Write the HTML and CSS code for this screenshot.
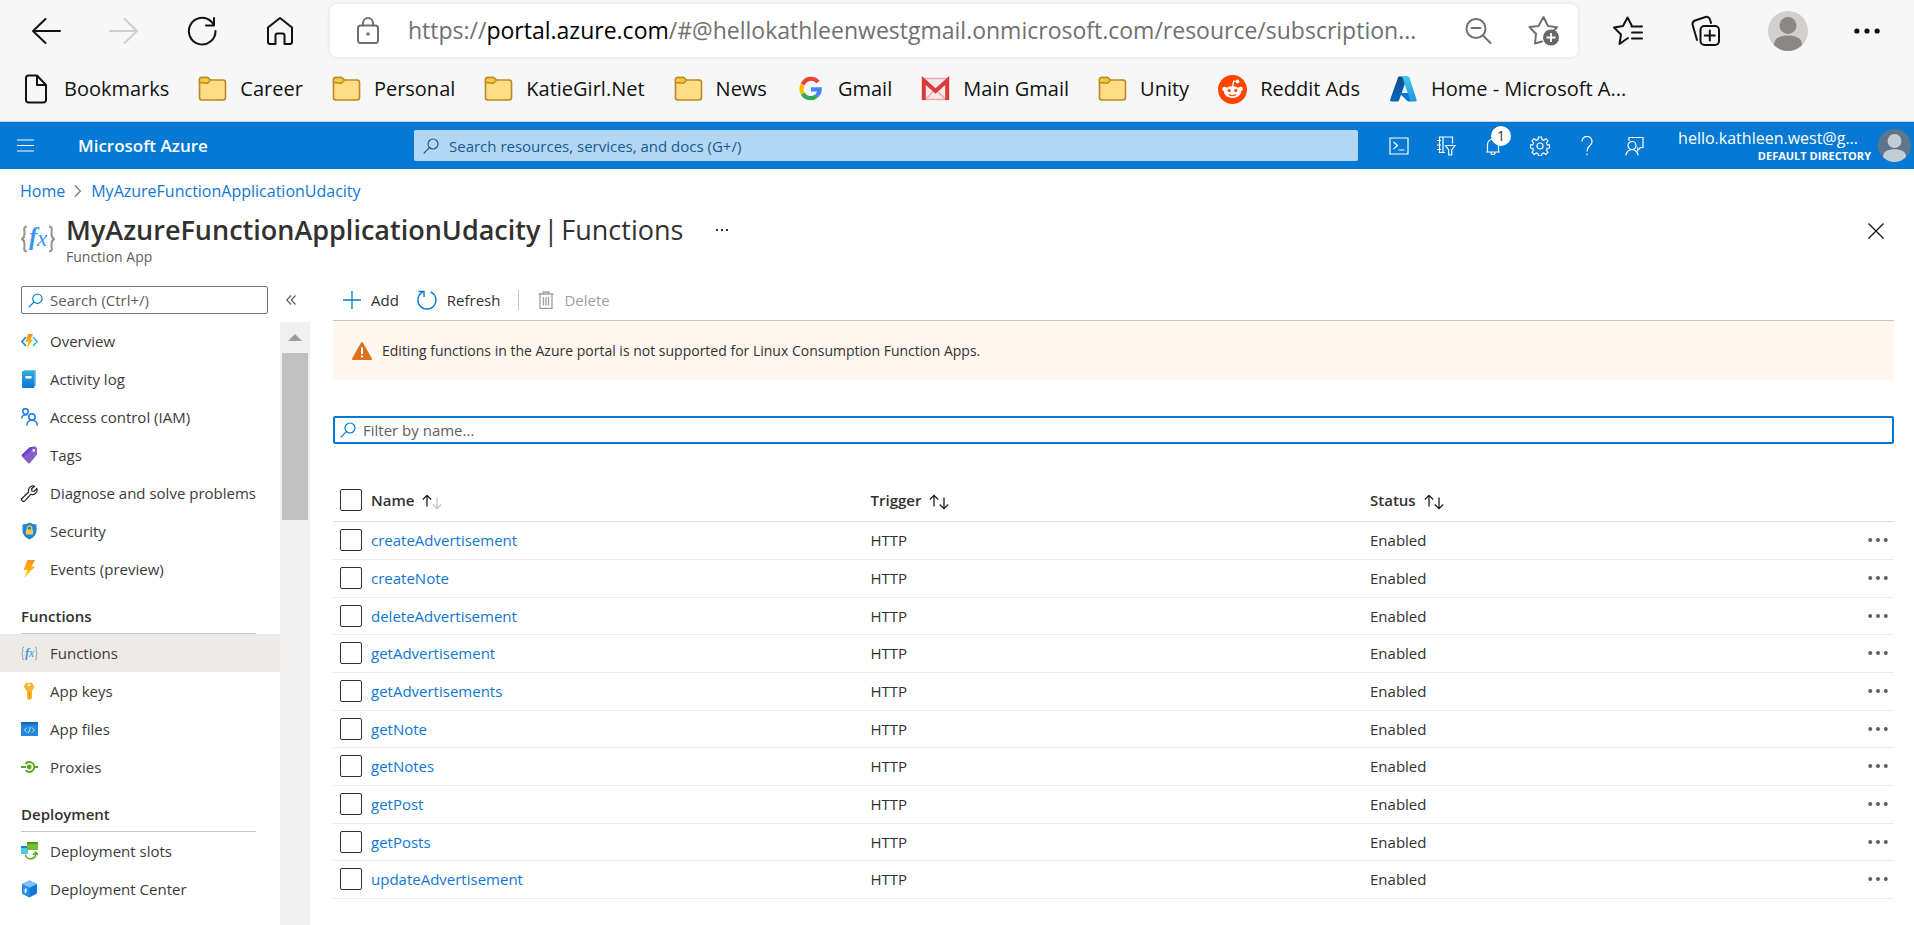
FILE: index.html
```html
<!DOCTYPE html>
<html lang="en">
<head>
<meta charset="utf-8">
<title>MyAzureFunctionApplicationUdacity | Functions - Microsoft Azure</title>
<link rel="stylesheet" href="styles.css">
</head>
<body>
<svg class="defs" aria-hidden="true">
  <defs>
    <linearGradient id="blue" x1="0" y1="0" x2="0" y2="1"><stop offset="0" stop-color="#32a9dd"/><stop offset="1" stop-color="#0f74d6"/></linearGradient>
    <linearGradient id="bolt" x1="0" y1="0" x2="0" y2="1"><stop offset="0" stop-color="#f78d1e"/><stop offset="1" stop-color="#ffd400"/></linearGradient>
    <linearGradient id="azureA" x1="0" y1="0" x2="0" y2="1"><stop offset="0" stop-color="#114a8b"/><stop offset="1" stop-color="#0669bc"/></linearGradient>
    <linearGradient id="azureB" x1="0" y1="0" x2="0" y2="1"><stop offset="0" stop-color="#3ccbf4"/><stop offset="1" stop-color="#2892df"/></linearGradient>
    <symbol id="folder" viewBox="0 0 29 26"><path d="M1.5 3.5a2 2 0 0 1 2-2h6l3 2.500H25a2.500 2.500 0 0 1 2.500 2.500v15a2.500 2.500 0 0 1-2.500 2.500H4A2.500 2.500 0 0 1 1.500 21.500z" fill="#ffdc85" stroke="#b98a20" stroke-width="1.600"/><path d="M1.500 6.500V3.500a2 2 0 0 1 2-2h6l3 2.500-3 3.200z" fill="#f8c93f" stroke="#b98a20" stroke-width="1.400" stroke-linejoin="round"/></symbol>
    <symbol id="lens" viewBox="0 0 16 16"><g fill="none" stroke="currentColor" stroke-width="1.200"><circle cx="10" cy="6" r="5"/><path d="M6.400 9.600.7 15.300"/></g></symbol>
    <symbol id="dots" viewBox="0 0 20 6"><g fill="currentColor"><circle cx="2.200" cy="3" r="2"/><circle cx="10" cy="3" r="2"/><circle cx="17.800" cy="3" r="2"/></g></symbol>
    <symbol id="sort" viewBox="0 0 20 16"><g fill="none" stroke="#201f1e" stroke-width="1.300"><path d="M5 12.500V1.500M.8 5.500 5 1.300l4.200 4.200"/><path class="down" d="M15 3.500v11M10.800 10.500l4.200 4.200 4.200-4.200"/></g></symbol>
    <symbol id="fx" viewBox="0 0 34 28"><path d="M6 1.500C2 1.500 3.500 5 3.500 8.500S3 13 1 14c2 1 2.500 2 2.500 5.500S2 26.500 6 26.500M28 1.500c4 0 2.500 3.500 2.500 7S31 13 33 14c-2 1-2.500 2-2.500 5.500s1.500 7-2.500 7" fill="none" stroke="#949494" stroke-width="2"/><text x="8" y="20" font-family="Liberation Serif, serif" font-style="italic" font-weight="bold" font-size="25" fill="#3797ee">f</text><text x="16" y="21" font-family="Liberation Serif, serif" font-style="italic" font-size="23" fill="#3797ee">x</text></symbol>
    <symbol id="user" viewBox="0 0 40 40"><circle cx="20" cy="14.500" r="8.500"/><path d="M6 34c0-7 6-9.500 14-9.500S34 27 34 34a19.500 19.500 0 0 1-28 0z"/></symbol>
  </defs>
</svg>

<div class="browser">
  <div class="nav">
    <div class="nav-buttons">
      <button aria-label="Back"><svg width="30" height="28" viewBox="0 0 30 28"><path d="M29 14H2M14.500 2 2 14l12.500 12" class="ln"/></svg></button>
      <button aria-label="Forward" class="off"><svg width="30" height="28" viewBox="0 0 30 28"><path d="M1 14h27M15.500 2 28 14 15.500 26" class="ln"/></svg></button>
      <button aria-label="Refresh"><svg width="30" height="30" viewBox="0 0 30 30"><path d="M28.500 15A13.300 13.300 0 1 1 24 5.200L27 9M27 2v7.500h-8" class="ln"/></svg></button>
      <button aria-label="Home"><svg width="30" height="30" viewBox="0 0 30 30"><path d="M3 11.500 15 2l12 9.500V26a2 2 0 0 1-2 2h-5.500v-8.500a2 2 0 0 0-2-2h-5a2 2 0 0 0-2 2V28H5a2 2 0 0 1-2-2z" class="ln"/></svg></button>
    </div>
    <div class="address">
      <svg width="24" height="30" viewBox="0 0 24 30"><rect x="2" y="9.500" width="20" height="17.500" rx="2.500" class="ln"/><path d="M7 9.500V7a5 5 0 0 1 10 0v2.500" class="ln"/><circle cx="12" cy="18" r="1.800" fill="currentColor"/></svg>
      <span class="url">https://<b>portal.azure.com</b>/#@hellokathleenwestgmail.onmicrosoft.com/resource/subscription...</span>
      <button aria-label="Zoom out"><svg width="28" height="28" viewBox="0 0 28 28"><circle cx="12" cy="11.500" r="9.500" class="ln"/><path d="M7.500 11h9M19 18.500l7.500 7.500" class="ln"/></svg></button>
      <button aria-label="Add to favorites"><svg width="32" height="31" viewBox="0 0 32 31"><path d="M14 26.500 7 28.500l1-9.500-6.500-7L10.500 11 15.500 2l4.500 9 9 1.200-3 3" class="ln"/><circle cx="23" cy="22.500" r="8" fill="#666"/><path d="M23 18v9M18.500 22.500h9" stroke="#fff" stroke-width="1.800"/></svg></button>
    </div>
    <div class="nav-tools">
      <button aria-label="Favorites"><svg width="32" height="30" viewBox="0 0 32 30"><path d="M16 22 7.500 28 9 18.500 2 11.500l9-1.500 4.500-8.500 4 7.500M19.500 10.500H30M20 16.500h10M20 22.500h10" class="ln"/></svg></button>
      <button aria-label="Collections"><svg width="32" height="32" viewBox="0 0 32 32"><rect x="10.500" y="11" width="18.500" height="19" rx="4" class="ln"/><path d="M19.800 15.500v10M14.800 20.500h10M7 25 2.500 9.500a4 4 0 0 1 2.500-4L15.500 2a3.500 3.500 0 0 1 4.500 2.500L21 8" class="ln"/></svg></button>
      <button aria-label="Profile" class="profile"><svg width="40" height="40" viewBox="0 0 40 40"><circle cx="20" cy="20" r="20" fill="#d2d0ce"/><use href="#user" fill="#8a8886"/></svg></button>
      <button aria-label="Settings and more"><svg width="26" height="8"><use href="#dots"/></svg></button>
    </div>
  </div>
  <nav class="bookmarks">
    <a href="#"><svg width="29" height="30" viewBox="0 0 29 30"><path d="M4 4a2.500 2.500 0 0 1 2.500-2.500H15L24 11v15a2.500 2.500 0 0 1-2.500 2.500h-15A2.500 2.500 0 0 1 4 26zM15 1.500V11h9" class="ln"/></svg>Bookmarks</a>
    <a href="#"><svg width="29" height="26"><use href="#folder"/></svg>Career</a>
    <a href="#"><svg width="29" height="26"><use href="#folder"/></svg>Personal</a>
    <a href="#"><svg width="29" height="26"><use href="#folder"/></svg>KatieGirl.Net</a>
    <a href="#"><svg width="29" height="26"><use href="#folder"/></svg>News</a>
    <a href="#"><svg width="29" height="26" viewBox="0 0 29 26"><g fill="none" stroke-width="4.200"><path d="M22 6A9 9 0 0 0 6.700 8.600" stroke="#ea4335"/><path d="M6.700 8.600a9 9 0 0 0 0 8.800" stroke="#fbbc05"/><path d="M6.700 17.400A9 9 0 0 0 20.500 20" stroke="#34a853"/><path d="M20.500 20a9 9 0 0 0 3.200-6.700H15" stroke="#4285f4"/></g></svg>Gmail</a>
    <a href="#"><svg width="29" height="26" viewBox="0 0 29 26"><path d="M1 2h27v22H1z" fill="#f7e9e9"/><path d="M5 23 14.500 13 24 23M1 2.500h27M1 23.500h27" fill="none" stroke="#eda9a9" stroke-width="1.500"/><path d="M2.800 24V4.500L14.500 15 26.200 4.500V24" fill="none" stroke="#d93a3f" stroke-width="4"/></svg>Main Gmail</a>
    <a href="#"><svg width="29" height="26"><use href="#folder"/></svg>Unity</a>
    <a href="#"><svg width="29" height="29" viewBox="0 0 29 29"><circle cx="14.500" cy="14.500" r="14.500" fill="#ff4500"/><g fill="#fff"><ellipse cx="14.500" cy="17" rx="8.500" ry="6"/><circle cx="6.500" cy="14" r="2.300"/><circle cx="22.500" cy="14" r="2.300"/><circle cx="19.500" cy="6.500" r="1.900"/></g><path d="M14.500 11.500 15.700 6l3.800 1" fill="none" stroke="#fff" stroke-width="1.200"/><g fill="#ff4500"><circle cx="11.200" cy="15.500" r="1.600"/><circle cx="17.800" cy="15.500" r="1.600"/></g><path d="M11 19.500q3.500 2.500 7 0" fill="none" stroke="#ff4500" stroke-width="1.200"/></svg>Reddit Ads</a>
    <a href="#"><svg width="29" height="26" viewBox="0 0 29 26"><path d="M10 .5h8.500L10 24.500q-.5 1-2 1H2.500q-2 0-1.300-2L9 1.500q.3-1 1-1z" fill="url(#azureA)"/><path d="M10 17h12l2 8-5 .5z" fill="#0078d4"/><path d="M12.500.5H19q1 0 1.500 1l7 22q.7 2-1.300 2H20q1-.5.800-2L13.500 1.500q-.3-1-1-1z" fill="url(#azureB)"/></svg>Home - Microsoft A...</a>
  </nav>
</div>

<header class="topbar">
  <button class="menu" aria-label="Show portal menu"><svg width="17" height="13" viewBox="0 0 17 13"><path d="M0 1h17M0 6.500h17M0 12h17" stroke="currentColor" stroke-width="1.200"/></svg></button>
  <a class="brand" href="#">Microsoft Azure</a>
  <label class="search"><svg width="16" height="16"><use href="#lens"/></svg><input type="text" aria-label="Search resources" placeholder="Search resources, services, and docs (G+/)"></label>
  <div class="tools">
    <button aria-label="Cloud Shell"><svg width="20" height="20" viewBox="0 0 20 20"><path d="M1 2h18v16H1zM4.500 6l4 3.500-4 3.500M9.500 14h6" class="thin"/></svg></button>
    <button aria-label="Directories"><svg width="20" height="20" viewBox="0 0 20 20"><path d="M9 16.500H3.500V1h13v6.500M7 1v15.500M1 4.500h4M1 9h4M1 13.500h4M9.500 9.500H19l-3.300 4.500v5h-3v-5z" class="thin"/></svg></button>
    <button aria-label="Notifications" class="bell"><svg width="20" height="20" viewBox="0 0 20 20"><path d="M3 16h14M4.500 16V8.500a5.500 5.500 0 0 1 11 0V16M8 16.500a2 2 0 0 0 4 0" class="thin"/></svg><span class="badge">1</span></button>
    <button aria-label="Settings"><svg width="20" height="20" viewBox="0 0 20 20"><circle cx="10" cy="10" r="3" class="thin"/><path d="M8.500 1h3l.5 2.500 1.700.7L15.900 2.700 18 4.900l-1.500 2.100.7 1.700 2.300.4v2.900l-2.300.5-.7 1.600 1.400 2.200-2.100 2.100-2.100-1.500-1.700.7-.5 2.300h-3L8 17.600l-1.700-.7-2.100 1.500-2.100-2.100 1.400-2.200-.7-1.600-2.300-.5V9.100l2.300-.4.700-1.700L2 4.900l2.100-2.200 2.200 1.500L8 3.500z" class="thin"/></svg></button>
    <button aria-label="Help"><svg width="20" height="20" viewBox="0 0 20 20"><path d="M5 5.500a5 5 0 1 1 8.500 3.400C11 11 10 12 10 15.500M10 17.700v1.500" class="thin"/></svg></button>
    <button aria-label="Feedback"><svg width="20" height="20" viewBox="0 0 20 20"><path d="M5 5V1.500h14v10h-2.500l-3 3V11.500M2 19.500a6 6 0 0 1 12 0" class="thin"/><circle cx="8" cy="9.500" r="4" class="thin"/></svg></button>
  </div>
  <button class="account"><span class="who"><span class="mail">hello.kathleen.west@g...</span><span class="dir">DEFAULT DIRECTORY</span></span><svg width="33" height="33" viewBox="0 0 40 40"><circle cx="20" cy="20" r="20" fill="#5f758d"/><use href="#user" fill="#c4ccd4"/></svg></button>
</header>

<nav class="crumbs" aria-label="Breadcrumb">
  <a href="#">Home</a>
  <svg width="8" height="14" viewBox="0 0 8 14"><path d="m1 1.500 5.500 5.500L1 12.500" fill="none" stroke="#767676" stroke-width="1.200"/></svg>
  <a href="#">MyAzureFunctionApplicationUdacity</a>
</nav>

<section class="title">
  <svg width="34" height="28"><use href="#fx"/></svg>
  <div>
    <div class="title-line">
      <h1><b>MyAzureFunctionApplicationUdacity</b><span>|</span><span>Functions</span></h1>
      <button aria-label="More"><svg width="14" height="4" viewBox="0 0 14 4"><path d="M1 1h2v2H1zM6 1h2v2H6zM11 1h2v2h-2z" fill="#323130"/></svg></button>
    </div>
    <p>Function App</p>
  </div>
  <button class="close" aria-label="Close"><svg width="16" height="16" viewBox="0 0 16 16"><path d="m.5.500 15 15m0-15-15 15" stroke="#111" stroke-width="1.300"/></svg></button>
</section>

<div class="body">
  <aside class="side">
    <div class="side-top">
      <label class="side-search"><svg width="15" height="15"><use href="#lens"/></svg><input type="text" aria-label="Search menu" placeholder="Search (Ctrl+/)"></label>
      <button aria-label="Collapse menu"><svg width="10" height="10" viewBox="0 0 10 10"><path d="M5 .5.800 5 5 9.500M9.500.500 5.300 5l4.200 4.500" fill="none" stroke="#605e5c" stroke-width="1.200"/></svg></button>
    </div>
    <div class="side-scroll">
      <nav class="side-list">
        <a href="#"><svg width="17" height="17" viewBox="0 0 17 17"><path d="M5 4 1 8.500 5 13" fill="none" stroke="#1f8ce0" stroke-width="1.800"/><path d="m12 4 4 4.500-4 4.500" fill="none" stroke="#3bc0e8" stroke-width="1.800"/><path d="M7 1h5L9.500 6.500H12L5.500 16l2-7H4.500z" fill="url(#bolt)"/></svg>Overview</a>
        <a href="#"><svg width="17" height="18" viewBox="0 0 17 18"><path d="M3 0h12v16H3z" fill="#7cc4f0"/><rect x="1" y="1" width="12.500" height="17" rx="1" fill="url(#blue)"/><path d="M4.500 6h6v2.500h-6z" fill="#fff"/></svg>Activity log</a>
        <a href="#"><svg width="17" height="18" viewBox="0 0 17 18"><g fill="none" stroke="#1b76e0" stroke-width="1.500"><circle cx="4.500" cy="3.500" r="2.700"/><path d="M.8 10.500C.8 7.500 3 6.500 6.500 7"/><circle cx="11" cy="9" r="3.200"/><path d="M5.800 17.500c0-7 10.500-7 10.500 0"/></g></svg>Access control (IAM)</a>
        <a href="#"><svg width="17" height="18" viewBox="0 0 17 18"><path d="M8.500 1.500 14 .5l2 1.500v6.500l-7 8.500q-1 1-2 0L1 10.500q-.7-1 .2-2z" fill="#8661c5"/><path d="M8.500 1.500 14 .5 1.500 11l-.5-1q-.5-.800.2-1.500z" fill="#6b3fd0"/><circle cx="12.800" cy="4.500" r="1.400" fill="#f2ecff"/></svg>Tags</a>
        <a href="#"><svg width="17" height="17" viewBox="0 0 17 17"><path d="M13.500 1.200A4.500 4.500 0 0 0 7.800 7L1.200 13.200a1.800 1.800 0 0 0 2.600 2.600L10 9.200a4.500 4.500 0 0 0 5.800-5.700l-2.700 2.800-2.200-.3-.3-2.200z" fill="none" stroke="#222" stroke-width="1.200" stroke-linejoin="round"/></svg>Diagnose and solve problems</a>
        <a href="#"><svg width="17" height="18" viewBox="0 0 17 18"><path d="M8.500.5q3 2 7 2V9q0 5-7 8.500Q1.500 14 1.500 9V2.500q4 0 7-2z" fill="#1d85dc"/><path d="M6.300 8V6a2.200 2.200 0 0 1 4.400 0v2" fill="none" stroke="#f5c13a" stroke-width="1.300"/><rect x="5" y="7.500" width="7" height="5" rx=".6" fill="#f9cb45"/></svg>Security</a>
        <a href="#"><svg width="17" height="18" viewBox="0 0 17 18"><path d="M6.500 0H14l-3.500 6.500H14L3 18l3.500-8H2.500z" fill="url(#bolt)"/></svg>Events (preview)</a>
        <h2>Functions</h2>
        <a href="#" class="on" aria-current="page"><svg width="17" height="15"><use href="#fx"/></svg>Functions</a>
        <a href="#"><svg width="17" height="18" viewBox="0 0 17 18"><path d="M5 .8h6L13.500 5 11 9v7.500l-2 1.500H7.500L6 16.500V9.500L2.500 5z" fill="#fbb731"/><circle cx="8" cy="3" r="1.200" fill="#fff"/><path d="M8.700 10v6" stroke="#e08b00" stroke-width="1"/></svg>App keys</a>
        <a href="#"><svg width="17" height="14" viewBox="0 0 17 14"><path d="M0 0h17v14H0z" fill="#2586dd"/><path d="M0 0h17v2.500H0z" fill="#1268bd"/><path d="M6 5.500 3.500 8 6 10.500M11 5.500 13.500 8 11 10.500M9.500 5l-2 6" fill="none" stroke="#c4e4fb"/></svg>App files</a>
        <a href="#"><svg width="17" height="12" viewBox="0 0 17 12"><path d="M0 6h5M13 6h4" stroke="#57a422" stroke-width="2"/><path d="M4.500 2.800a5 5 0 1 1 0 6.400" fill="none" stroke="#57a422" stroke-width="1.800"/><circle cx="8.200" cy="6" r="2.400" fill="#57a422"/></svg>Proxies</a>
        <h2>Deployment</h2>
        <a href="#"><svg width="17" height="18" viewBox="0 0 17 18"><path d="M0 4h7v8H0z" fill="#4cc8e8"/><path d="M0 4h7v2H0z" fill="#1688b8"/><path d="M6 0h11v8H6z" fill="#76bc2d"/><path d="M6 0h11v2H6z" fill="#4f9a1e"/><path d="M4.500 12.500c.5 6 10.500 6 10.300-1.500M12 13l2.800-2.800L17 13" fill="none" stroke="#57a422" stroke-width="1.500"/></svg>Deployment slots</a>
        <a href="#"><svg width="17" height="18" viewBox="0 0 17 18"><path d="M8.500.5 16 4v9.500L8.500 17.500 1 13.500V4z" fill="#1479d6"/><path d="M8.500.5 16 4 8.500 7.800 1 4z" fill="#7cc0f5"/><path d="M1 4l7.500 3.800v9.700L1 13.500z" fill="#2f8fe4"/><path d="M3.500 9.500 5.500 8v2.500L6 11 3.800 13.500z" fill="#fff"/></svg>Deployment Center</a>
      </nav>
      <div class="scrollbar"><svg width="14" height="7" viewBox="0 0 14 7"><path d="M0 7 7 0l7 7z" fill="#9c9c9c"/></svg><div class="thumb"></div></div>
    </div>
  </aside>

  <main class="main">
    <div class="commands">
      <button><svg width="18" height="18" viewBox="0 0 18 18"><path d="M9 0v18M0 9h18" stroke="#0078d4" stroke-width="1.300"/></svg>Add</button>
      <button><svg width="20" height="20" viewBox="0 0 20 20"><path d="M13.500 1.800A9 9 0 1 1 5.500 2.200M1.500 1.500H7V7" fill="none" stroke="#0078d4" stroke-width="1.400"/></svg>Refresh</button>
      <span class="rule"></span>
      <button disabled><svg width="16" height="18" viewBox="0 0 16 18"><path d="M.5 3h15M5 3V1h6v2M2 3v14.300h12V3M5.500 6v8.500M8 6v8.500M10.500 6v8.500" fill="none" stroke="#a19f9d" stroke-width="1.300"/></svg>Delete</button>
    </div>
    <div class="warning" role="alert"><svg width="20" height="18" viewBox="0 0 20 18"><path d="M10 1 19 17H1z" fill="#db7218" stroke="#db7218" stroke-width="2" stroke-linejoin="round"/><path d="M10 5.500v6.500M10 13.500v2" stroke="#fff" stroke-width="2"/></svg>Editing functions in the Azure portal is not supported for Linux Consumption Function Apps.</div>
    <label class="filter"><svg width="16" height="16"><use href="#lens"/></svg><input type="text" aria-label="Filter by name" placeholder="Filter by name..."></label>
    <table class="grid">
      <colgroup><col class="c-check"><col class="c-name"><col class="c-trigger"><col><col class="c-menu"></colgroup>
      <thead>
        <tr><th><input type="checkbox" aria-label="Select all"></th><th>Name <svg width="20" height="16" class="asc"><use href="#sort"/></svg></th><th>Trigger <svg width="20" height="16"><use href="#sort"/></svg></th><th>Status <svg width="20" height="16"><use href="#sort"/></svg></th><th></th></tr>
      </thead>
      <tbody>
        <tr><td><input type="checkbox" aria-label="Select createAdvertisement"></td><td><a href="#">createAdvertisement</a></td><td>HTTP</td><td>Enabled</td><td><button aria-label="More"><svg width="20" height="6"><use href="#dots"/></svg></button></td></tr>
        <tr><td><input type="checkbox" aria-label="Select createNote"></td><td><a href="#">createNote</a></td><td>HTTP</td><td>Enabled</td><td><button aria-label="More"><svg width="20" height="6"><use href="#dots"/></svg></button></td></tr>
        <tr><td><input type="checkbox" aria-label="Select deleteAdvertisement"></td><td><a href="#">deleteAdvertisement</a></td><td>HTTP</td><td>Enabled</td><td><button aria-label="More"><svg width="20" height="6"><use href="#dots"/></svg></button></td></tr>
        <tr><td><input type="checkbox" aria-label="Select getAdvertisement"></td><td><a href="#">getAdvertisement</a></td><td>HTTP</td><td>Enabled</td><td><button aria-label="More"><svg width="20" height="6"><use href="#dots"/></svg></button></td></tr>
        <tr><td><input type="checkbox" aria-label="Select getAdvertisements"></td><td><a href="#">getAdvertisements</a></td><td>HTTP</td><td>Enabled</td><td><button aria-label="More"><svg width="20" height="6"><use href="#dots"/></svg></button></td></tr>
        <tr><td><input type="checkbox" aria-label="Select getNote"></td><td><a href="#">getNote</a></td><td>HTTP</td><td>Enabled</td><td><button aria-label="More"><svg width="20" height="6"><use href="#dots"/></svg></button></td></tr>
        <tr><td><input type="checkbox" aria-label="Select getNotes"></td><td><a href="#">getNotes</a></td><td>HTTP</td><td>Enabled</td><td><button aria-label="More"><svg width="20" height="6"><use href="#dots"/></svg></button></td></tr>
        <tr><td><input type="checkbox" aria-label="Select getPost"></td><td><a href="#">getPost</a></td><td>HTTP</td><td>Enabled</td><td><button aria-label="More"><svg width="20" height="6"><use href="#dots"/></svg></button></td></tr>
        <tr><td><input type="checkbox" aria-label="Select getPosts"></td><td><a href="#">getPosts</a></td><td>HTTP</td><td>Enabled</td><td><button aria-label="More"><svg width="20" height="6"><use href="#dots"/></svg></button></td></tr>
        <tr><td><input type="checkbox" aria-label="Select updateAdvertisement"></td><td><a href="#">updateAdvertisement</a></td><td>HTTP</td><td>Enabled</td><td><button aria-label="More"><svg width="20" height="6"><use href="#dots"/></svg></button></td></tr>
      </tbody>
    </table>
  </main>
</div>
</body>
</html>
```
FILE: styles.css
```css
* { box-sizing: border-box; }

body {
  margin: 0;
  min-height: 100vh;
  display: flex;
  flex-direction: column;
  background: #fff;
  color: #323130;
  font-family: "Open Sans", "Noto Sans", sans-serif;
  font-size: 15px;
  line-height: 24px;
  white-space: nowrap;
}

a { color: #0f78d4; text-decoration: none; }
button { padding: 0; border: 0; background: none; color: inherit; font: inherit; display: flex; align-items: center; }
input { font: inherit; color: inherit; }
input[type="text"] { flex: 1; min-width: 0; padding: 0; border: 0; outline: 0; background: none; }
svg { display: block; flex: none; }
.defs { position: absolute; width: 0; height: 0; }
.ln { fill: none; stroke: currentColor; stroke-width: 2; stroke-linecap: round; stroke-linejoin: round; }
.thin { fill: none; stroke: currentColor; stroke-width: 1.2; }

/* Browser frame */
.browser { height: 122px; background: #f7f7f7; border-bottom: 1px solid #d0d0d0; color: #111; }
.nav { display: flex; align-items: center; padding-top: 4px; }
.nav-buttons { display: flex; align-items: center; gap: 48px; width: 330px; padding-left: 31px; }
.off { color: #cfcfcf; }
.address {
  flex: 1;
  min-width: 0;
  height: 53px;
  display: flex;
  align-items: center;
  padding: 0 18px 0 26px;
  border-radius: 7px;
  background: #fff;
  box-shadow: 0 0 4px rgba(0, 0, 0, 0.1);
  color: #707070;
}
.url { flex: 1; min-width: 0; overflow: hidden; margin-left: 28px; padding-bottom: 2px; font-size: 23px; line-height: 32px; }
.url b { font-weight: 400; color: #000; }
.address button + button { margin-left: 36px; }
.nav-tools { display: flex; align-items: center; gap: 46px; padding: 0 34px 0 34px; }
.bookmarks { display: flex; align-items: center; gap: 29px; height: 56px; margin-top: 4px; padding-left: 22px; font-size: 20px; }
.bookmarks a { display: flex; align-items: center; gap: 13px; color: #111; }

/* Portal header */
.topbar { height: 47px; display: flex; align-items: center; padding-left: 17px; background: #0579d3; color: #fff; }
.brand { width: 336px; margin-left: 44px; padding-right: 16px; color: #fff; font-size: 17px; font-weight: 600; }
.search { flex: 1; height: 31px; display: flex; align-items: center; gap: 10px; padding: 0 9px; border-radius: 2px; background: #b3d7f2; color: #17588f; }
.search input::placeholder { color: #17588f; opacity: 1; }
.tools { display: flex; gap: 27px; margin: 0 34px 0 31px; }
.bell { position: relative; }
.badge { position: absolute; left: 8px; top: -10px; width: 20px; height: 20px; border-radius: 10px; background: #fff; color: #333; font-size: 14px; line-height: 20px; text-align: center; }
.account { gap: 7px; padding-right: 3px; }
.who { display: flex; flex-direction: column; }
.mail { font-size: 16px; line-height: 20px; text-align: left; padding-right: 13px; }
.dir { font-size: 11px; line-height: 16px; font-weight: 700; text-align: right; }

/* Breadcrumb and title */
.crumbs { display: flex; align-items: center; gap: 9px; padding: 10px 21px 0 20px; font-size: 16px; }
.title { display: flex; align-items: flex-start; gap: 11px; padding: 9px 30px 14px 21px; }
.title > svg { margin-top: 13px; }
.title-line { display: flex; align-items: center; gap: 32px; }
.title h1 { display: flex; gap: 3px; margin: 0; font-size: 27px; line-height: 36px; font-weight: 400; }
.title h1 b { font-weight: 600; }
.title p { margin: 0; font-size: 14px; line-height: 18px; color: #605e5c; }
.close { margin: 11px 0 0 auto; }

/* Layout */
.body { flex: 1; display: flex; }

/* Side menu */
.side { width: 310px; display: flex; flex-direction: column; }
.side-top { display: flex; align-items: center; gap: 18px; padding: 6px 14px 8px 21px; }
.side-search { width: 247px; height: 28px; display: flex; align-items: center; gap: 7px; padding: 0 6px; border: 1px solid #767676; border-radius: 2px; color: #0078d4; }
.side-search input::placeholder, .filter input::placeholder { color: #605e5c; opacity: 1; }
.side-scroll { flex: 1; display: flex; }
.side-list { flex: 1; }
.side-list a { height: 38px; display: flex; align-items: center; gap: 12px; padding-left: 21px; color: #3b3a39; }
.side-list .on { background: #edebe9; }
.side-list h2 { height: 46px; margin: 0 24px 0 21px; padding-top: 16px; border-bottom: 1px solid #c8c6c4; font-size: 15px; line-height: 24px; font-weight: 600; }
.scrollbar { width: 30px; display: flex; flex-direction: column; align-items: center; gap: 12px; padding-top: 12px; background: #f0f0f0; }
.thumb { width: 26px; height: 167px; background: #c1c1c1; }

/* Functions list */
.main { flex: 1; min-width: 0; padding: 0 20px 0 23px; }
.commands { height: 41px; display: flex; align-items: center; padding-left: 10px; border-bottom: 1px solid #c8c8c8; }
.commands button { gap: 10px; margin-right: 18px; }
.commands button:disabled { color: #a19f9d; }
.rule { width: 1px; height: 20px; margin-right: 19px; background: #c8c6c4; }
.warning { height: 59px; display: flex; align-items: center; gap: 10px; padding-left: 19px; background: #fff7f0; font-size: 14px; }
.filter { height: 28px; display: flex; align-items: center; gap: 7px; margin: 36px 0; padding: 0 5px; border: 2px solid #0078d4; border-radius: 2px; color: #0078d4; }
.grid { width: 100%; table-layout: fixed; border-collapse: collapse; }
.grid th, .grid td { height: 38px; padding: 0; border-bottom: 1px solid #edebe9; text-align: left; vertical-align: middle; line-height: 20px; }
.grid tbody tr:nth-child(3n) td { height: 37px; }
.grid th { height: 41px; border-bottom-color: #e1dfdd; font-weight: 600; }
.grid th svg { display: inline-block; margin-left: 4px; vertical-align: middle; }
.asc { --down: #c8c6c4; }
.down { stroke: var(--down, #201f1e); }
.grid button { margin-left: auto; padding-right: 6px; color: #605e5c; }
.grid input { appearance: none; display: block; width: 22px; height: 22px; margin: 0 0 0 7px; border: 1px solid #323130; border-radius: 2px; background: #fff; }
.c-check { width: 38px; }
.c-name, .c-trigger { width: 32%; }
.c-menu { width: 60px; }
```
